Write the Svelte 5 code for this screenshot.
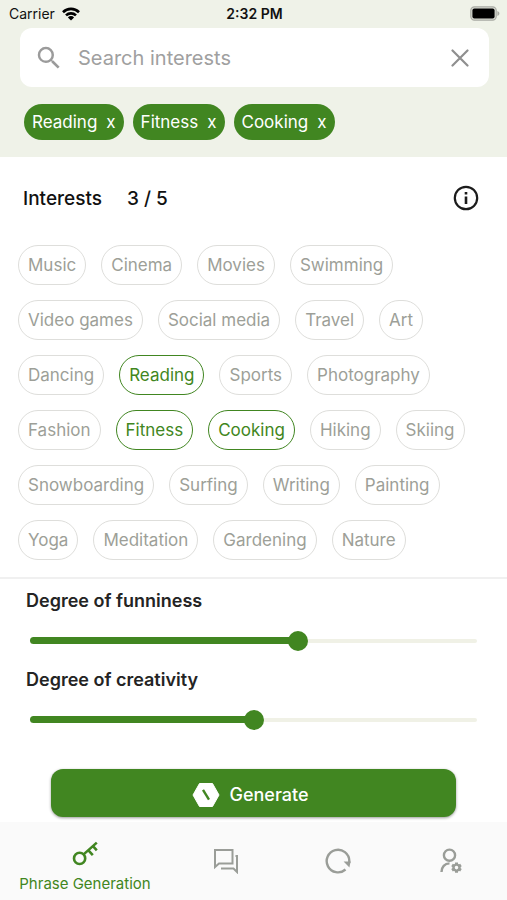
<script>
  const interests = [
    'Music',
    'Cinema',
    'Movies',
    'Swimming',
    'Video games',
    'Social media',
    'Travel',
    'Art',
    'Dancing',
    'Reading',
    'Sports',
    'Photography',
    'Fashion',
    'Fitness',
    'Cooking',
    'Hiking',
    'Skiing',
    'Snowboarding',
    'Surfing',
    'Writing',
    'Painting',
    'Yoga',
    'Meditation',
    'Gardening',
    'Nature',
  ]
  const max = 5

  let query = $state('')
  let selected = $state(['Reading', 'Fitness', 'Cooking'])
  let sliders = $state([
    { id: 'funniness', label: 'Degree of funniness', value: 60 },
    { id: 'creativity', label: 'Degree of creativity', value: 50 },
  ])

  let visible = $derived(
    interests.filter((i) => i.toLowerCase().includes(query.toLowerCase()))
  )

  const toggle = (name) => {
    if (selected.includes(name)) {
      selected = selected.filter((s) => s !== name)
    } else if (selected.length < max) {
      selected = [...selected, name]
    }
  }
</script>

<div class="app">
  <header>
    <div class="status">
      <span class="carrier">
        Carrier
        <svg width="18" height="14" viewBox="0 0 18 14">
          <g fill="none" stroke="#000" stroke-width="2.6">
            <path d="M1 5.2a11.4 11.4 0 0 1 16 0" />
            <path d="M4 8.4a7.1 7.1 0 0 1 10 0" />
          </g>
          <path d="M5.9 10.4a4.4 4.4 0 0 1 6.2 0L9 13.6z" />
        </svg>
      </span>
      <span class="time">2:32 PM</span>
      <svg class="battery" width="30" height="15" viewBox="0 0 30 15">
        <rect x="0.8" y="0.8" width="25.4" height="13.4" rx="3.6" fill="#dcded6" stroke="#a9aba4" stroke-width="1.2" />
        <rect x="2.4" y="2.4" width="22.2" height="10.2" rx="2" />
        <path d="M27.4 5v5c1.2-.4 2-1.4 2-2.5s-.8-2.1-2-2.5z" fill="#a9aba4" />
      </svg>
    </div>

    <div class="search">
      <svg width="30" height="30" viewBox="0 0 24 24" fill="#9b9b9b">
        <path d="M15.5 14h-.79l-.28-.27A6.47 6.47 0 0 0 16 9.5 6.5 6.5 0 1 0 9.5 16c1.61 0 3.09-.59 4.23-1.57l.27.28v.79l5 4.99L20.49 19l-4.99-5zm-6 0C7.01 14 5 11.99 5 9.5S7.01 5 9.5 5 14 7.01 14 9.5 11.99 14 9.5 14z" />
      </svg>
      <input
        type="text"
        aria-label="Search interests"
        placeholder="Search interests"
        bind:value={query}
      />
      <button class="icon" aria-label="Clear search" onclick={() => (query = '')}>
        <svg width="18" height="18" viewBox="0 0 18 18">
          <path d="M1.5 1.5l15 15M16.5 1.5l-15 15" stroke="#8f8f8f" stroke-width="2.2" stroke-linecap="round" />
        </svg>
      </button>
    </div>

    <div class="picked">
      {#each selected as name}
        <button onclick={() => toggle(name)}>{name}<span>x</span></button>
      {/each}
    </div>
  </header>

  <main>
    <div class="title">
      <h2>Interests</h2>
      <span>{selected.length} / {max}</span>
      <button class="icon info" aria-label="Info">
        <svg width="26" height="26" viewBox="0 0 26 26">
          <circle cx="13" cy="13" r="11.2" fill="none" stroke="#1c1c1c" stroke-width="2.2" />
          <path d="M11.7 11.4h2.6V19h-2.6zM11.7 7h2.6v2.6h-2.6z" fill="#1c1c1c" />
        </svg>
      </button>
    </div>

    <div class="chips">
      {#each visible as name}
        <button
          class:active={selected.includes(name)}
          aria-pressed={selected.includes(name)}
          onclick={() => toggle(name)}>{name}</button
        >
      {/each}
    </div>

    <div class="sliders">
      {#each sliders as s}
        <label for={s.id}>{s.label}</label>
        <div class="slider">
          <div class="track"></div>
          <div class="fillbox">
            <div class="fill" style="width:{s.value}%"></div>
          </div>
          <input id={s.id} type="range" min="0" max="100" bind:value={s.value} />
        </div>
      {/each}
    </div>

    <button class="generate">
      <svg width="28" height="26" viewBox="0 0 28 26">
        <path d="M7.5 1.5h13L27 13l-6.5 11.5h-13L1 13z" fill="#fff" stroke="#fff" stroke-linejoin="round" />
        <path d="M11 7.8l6 9.8" stroke="#418621" stroke-width="2.4" />
      </svg>
      Generate
    </button>
  </main>

  <nav>
    <a href="#phrase" class="current">
      <svg width="26" height="26" viewBox="0 0 26 26" fill="none" stroke="#418621" stroke-width="2.6">
        <circle cx="7.6" cy="17.4" r="5.6" />
        <path d="M11.6 13.4L24.8 1.6M16.4 9.4l4.4 4.8M21 5.200l3.800 4.200" />
      </svg>
      Phrase Generation
    </a>
    <a href="#chat" aria-label="Chat">
      <svg width="26" height="26" viewBox="0 0 26 26" fill="none" stroke="#9a9d98" stroke-width="2">
        <path d="M2 2h17.5v13.500H6L2 19z" />
        <path d="M22.500 8H24v16l-3.500-3.500H8" />
      </svg>
    </a>
    <a href="#history" aria-label="History">
      <svg width="26" height="26" viewBox="0 0 26 26">
        <path d="M20.5 21.5A11.3 11.3 0 1 1 24.3 13v2" fill="none" stroke="#9a9d98" stroke-width="2.4" />
        <path d="M18.600 13.400l7 .2-1.200 6z" fill="#9a9d98" />
      </svg>
    </a>
    <a href="#profile" aria-label="Profile">
      <svg width="26" height="26" viewBox="0 0 26 26" fill="none" stroke="#9a9d98" stroke-width="2.4">
        <circle cx="11.500" cy="7.200" r="5.600" />
        <path d="M3.500 24c0-5 3.200-8.600 8-8.600" />
        <circle cx="18.500" cy="19.600" r="3" />
        <path d="M18.500 16.600v-2.200M18.500 22.600v2.200M15.900 18.100L14 17M21.100 21.100l1.900 1.100M15.900 21.100L14 22.200M21.100 18.100L23 17" stroke-width="3" />
      </svg>
    </a>
  </nav>
</div>

<style>
  :global(body) {
    margin: 0;
    background: #fff;
  }

  .app {
    display: flex;
    flex-direction: column;
    min-height: 100vh;
    font-family: Inter, 'Liberation Sans', sans-serif;
    color: #111;
  }

  button {
    font: inherit;
    margin: 0;
    cursor: pointer;
  }

  svg {
    display: block;
    flex: none;
  }

  header {
    background: #eff2e8;
    padding-bottom: 17px;
  }

  .status {
    display: grid;
    grid-template-columns: 1fr auto 1fr;
    align-items: center;
    height: 27px;
    padding: 0 7px 1px 9px;
    font-size: 14px;
  }

  .carrier {
    display: flex;
    align-items: center;
    gap: 7px;
  }

  .time {
    font-weight: 600;
  }

  .battery {
    justify-self: end;
  }

  .search {
    display: flex;
    align-items: center;
    height: 59px;
    margin: 0 18px 0 20px;
    padding: 0 12px 0 14px;
    border-radius: 12px;
    background: #fff;
  }

  .search input {
    flex: 1;
    min-width: 0;
    margin-left: 14px;
    padding: 0;
    border: 0;
    outline: 0;
    background: none;
    font: inherit;
    font-size: 20px;
  }

  .search input::placeholder {
    color: #a0a0a0;
    opacity: 1;
  }

  .icon {
    display: grid;
    place-items: center;
    width: 34px;
    height: 34px;
    padding: 0;
    border: 0;
    background: none;
  }

  .picked {
    display: flex;
    flex-wrap: wrap;
    gap: 9px;
    min-height: 36px;
    padding: 17px 24px 0;
  }

  .picked button {
    display: flex;
    align-items: center;
    gap: 9px;
    height: 36px;
    padding: 0 8px;
    border: 0;
    border-radius: 18px;
    background: #418621;
    color: #fff;
    font-size: 17px;
  }

  main {
    flex: 1;
  }

  .title {
    display: flex;
    align-items: center;
    gap: 25px;
    padding: 24px 24px 30px 23px;
    font-size: 19px;
    font-weight: 500;
  }

  h2 {
    margin: 0;
    font: inherit;
  }

  .info {
    margin-left: auto;
  }

  .chips {
    display: flex;
    flex-wrap: wrap;
    gap: 15px;
    padding: 0 18px 17px;
    border-bottom: 2px solid #f0f0f0;
  }

  .chips button {
    height: 40px;
    padding: 0 9px;
    border: 1px solid #dededb;
    border-radius: 20px;
    background: #fff;
    color: #9d9f98;
    font-size: 17px;
  }

  .chips .active {
    border-color: #418621;
    color: #418621;
  }

  .sliders {
    display: flex;
    flex-direction: column;
    padding: 11px 20px 0;
  }

  label {
    padding-left: 6px;
    font-size: 18px;
    font-weight: 600;
    line-height: 22px;
    color: #242424;
  }

  .slider {
    display: grid;
    align-items: center;
    height: 57px;
  }

  .slider > * {
    grid-area: 1 / 1;
  }

  .track {
    height: 4px;
    margin: 0 10px;
    border-radius: 2px;
    background: #f0f1e6;
  }

  .fillbox {
    margin: 0 10px;
  }

  .fill {
    height: 7px;
    border-radius: 4px;
    background: #418621;
  }

  .slider input {
    appearance: none;
    width: 100%;
    height: 20px;
    margin: 0;
    background: none;
  }

  .slider input::-webkit-slider-thumb {
    appearance: none;
    width: 20px;
    height: 20px;
    border-radius: 50%;
    background: #418621;
  }

  .generate {
    display: flex;
    align-items: center;
    justify-content: center;
    gap: 9px;
    width: 80%;
    height: 48px;
    margin: 21px auto 5px;
    padding: 3px 6px 0 0;
    border: 0;
    border-radius: 12px;
    background: #418621;
    box-shadow: 0 1px 3px rgba(0, 0, 0, 0.4);
    color: #fff;
    font-size: 18px;
    font-weight: 500;
  }

  nav {
    display: flex;
    align-items: center;
    height: 78px;
    background: #fafafa;
  }

  nav a {
    display: flex;
    flex: 1;
    flex-direction: column;
    align-items: center;
    gap: 7px;
    text-decoration: none;
    color: #418621;
    font-size: 15px;
    white-space: nowrap;
  }

  nav .current {
    flex: 0 0 170px;
    padding-top: 12px;
  }
</style>
